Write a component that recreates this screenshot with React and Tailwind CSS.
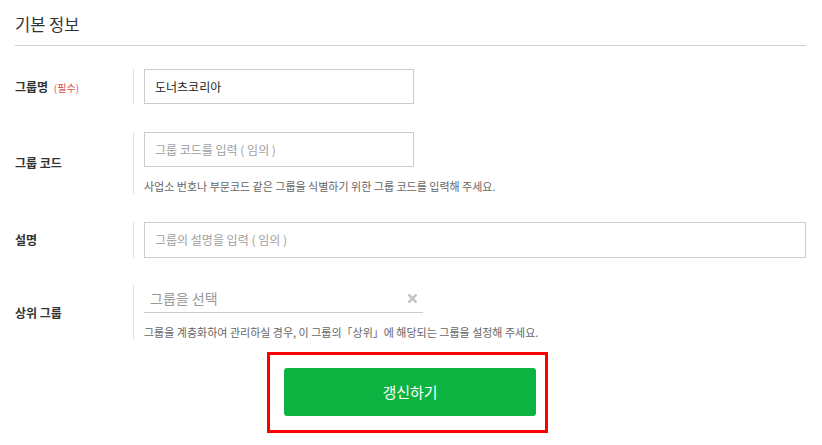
import React from "react";

const FONT = "font-['Noto_Sans_CJK_KR','Noto_Sans',sans-serif]";

function Row({ label, children, className = "" }) {
  return (
    <div className={`flex items-center ${className}`}>
      <div className="w-[118px] shrink-0 text-[12px] font-bold text-[#333]">{label}</div>
      <div className="flex-1 border-l border-[#e2e2e2] pl-[10px]">{children}</div>
    </div>
  );
}

export default function App() {
  return (
    <div className={`w-[822px] h-[445px] bg-white overflow-hidden ${FONT}`}>
      <div className="pl-[15px] pr-[16px]">
        {/* Header */}
        <div className="pt-[12px] pb-[9px] border-b border-[#cfcfcf]">
          <h2 className="text-[16.5px] leading-[24px] text-[#333]">기본 정보</h2>
        </div>

        {/* 그룹명 */}
        <Row
          className="mt-[23px]"
          label={
            <span>
              그룹명 <span className="ml-[3px] text-[10px] font-normal text-[#e2504f]">(필수)</span>
            </span>
          }
        >
          <div className="w-[270px] h-[35px] border border-[#cccccc] flex items-center px-[10px] text-[12px] text-[#222]">
            도너츠코리아
          </div>
        </Row>

        {/* 그룹 코드 */}
        <Row className="mt-[28px]" label="그룹 코드">
          <div className="w-[270px] h-[35px] border border-[#cccccc] flex items-center px-[10px] text-[12px] text-[#a0a0a0]">
            그룹 코드를 입력 ( 임의 )
          </div>
          <p className="mt-[11px] text-[11px] leading-[16px] text-[#666]">
            사업소 번호나 부문코드 같은 그룹을 식별하기 위한 그룹 코드를 입력해 주세요.
          </p>
        </Row>

        {/* 설명 */}
        <Row className="mt-[28px]" label="설명">
          <div className="h-[36px] border border-[#cccccc] flex items-center px-[10px] text-[12px] text-[#a0a0a0]">
            그룹의 설명을 입력 ( 임의 )
          </div>
        </Row>

        {/* 상위 그룹 */}
        <Row className="mt-[27px]" label="상위 그룹">
          <div className="w-[279px] h-[28px] border-b border-[#cccccc] flex items-center justify-between pl-[6px] pr-[6px]">
            <span className="text-[14px] text-[#999]">그룹을 선택</span>
            <svg width="9" height="9" viewBox="0 0 10 10">
              <path d="M1.5 1.5 L8.5 8.5 M8.5 1.5 L1.5 8.5" stroke="#c4c4c4" strokeWidth="2.8" strokeLinecap="square" />
            </svg>
          </div>
          <p className="mt-[11px] text-[11px] leading-[16px] text-[#666]">
            그룹을 계층화하여 관리하실 경우, 이 그룹의「상위」에 해당되는 그룹을 설정해 주세요.
          </p>
        </Row>
      </div>

      {/* Submit */}
      <div className="mt-[12px] pl-[267px]">
        <div className="w-[281px] h-[81px] border-[3px] border-[#ff0000] pl-[14px] pt-[13px]">
          <button className="w-[252px] h-[48px] rounded-[3px] bg-[#0db340] text-white text-[15px]">
            갱신하기
          </button>
        </div>
      </div>
    </div>
  );
}
